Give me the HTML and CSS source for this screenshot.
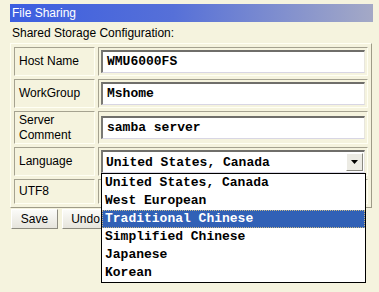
FILE: index.html
```html
<!DOCTYPE html>
<html lang="en">
<head>
    <meta charset="UTF-8">
    <title>File Sharing</title>
    <link rel="stylesheet" href="styles.css">
</head>
<body>
    <div class="page">
        <div class="title-bar">File Sharing</div>
        <div class="subtitle">Shared Storage Configuration:</div>

        <table class="config">
            <tr class="row-host">
                <td class="label">Host Name</td>
                <td class="value"><div class="field">WMU6000FS</div></td>
            </tr>
            <tr class="row-group">
                <td class="label">WorkGroup</td>
                <td class="value"><div class="field">Mshome</div></td>
            </tr>
            <tr class="row-comment">
                <td class="label">Server<br>Comment</td>
                <td class="value"><div class="field">samba server</div></td>
            </tr>
            <tr class="row-lang">
                <td class="label">Language</td>
                <td class="value">
                    <div class="select-wrap">
                        <div class="select">
                            <span class="select-text">United States, Canada</span>
                            <span class="select-arrow">
                                <svg width="7" height="4" viewBox="0 0 7 4"><path d="M0 0h7L3.5 4z" fill="#000"/></svg>
                            </span>
                        </div>
                        <ul class="options">
                            <li>United States, Canada</li>
                            <li>West European</li>
                            <li class="selected">Traditional Chinese</li>
                            <li>Simplified Chinese</li>
                            <li>Japanese</li>
                            <li>Korean</li>
                        </ul>
                    </div>
                </td>
            </tr>
            <tr class="row-utf">
                <td class="label">UTF8</td>
                <td class="value"></td>
            </tr>
        </table>

        <div class="buttons">
            <button class="btn">Save</button>
            <button class="btn">Undo</button>
        </div>
    </div>
</body>
</html>
```

FILE: styles.css
```css
* {
    margin: 0;
    padding: 0;
    box-sizing: border-box;
}

html, body {
    min-height: 100vh;
}

body {
    font-family: "Liberation Sans", Arial, sans-serif;
    font-size: 12px;
    background-color: #f5f3de;
    color: #000;
}

.page {
    min-height: 292px;
    padding: 4px 6px 0 10px;
}

.title-bar {
    height: 18px;
    line-height: 18px;
    padding-left: 2px;
    color: #fff;
    font-size: 12px;
    background: linear-gradient(to right, #3c5ee0 0%, #5670d8 45%, #a4a9c6 100%);
}

.subtitle {
    margin-top: 4px;
    padding-left: 2px;
    line-height: 14px;
}

.config {
    margin-top: 3px;
    width: 362px;
    border-collapse: separate;
    border-spacing: 3px;
    border: 1px solid;
    border-color: #fffff4 #9e9b88 #9e9b88 #fffff4;
}

.config td {
    border: 1px solid;
    border-color: #a5a290 #fffff4 #fffff4 #a5a290;
    vertical-align: middle;
}

.label {
    width: 82px;
    padding: 0 4px;
    line-height: 15px;
}

.value {
    padding: 2px;
}

.row-host td, .row-group td { height: 28px; }
.row-comment td { height: 33px; }
.row-lang td { height: 26px; }
.row-utf td { height: 25px; }

.field {
    height: 23px;
    line-height: 19px;
    padding-left: 4px;
    background: #fff;
    border-style: solid;
    border-width: 2px 1px 1px 2px;
    border-color: #6f6e6a #e8e6de #d8d6e4 #7a7974;
    font-family: "Liberation Mono", "DejaVu Sans Mono", monospace;
    font-weight: bold;
    font-size: 13px;
}

.select-wrap {
    position: relative;
}

.select {
    display: flex;
    align-items: center;
    height: 23px;
    width: 264px;
    background: #fff;
    border-style: solid;
    border-width: 2px 1px 1px 2px;
    border-color: #6f6e6a #e8e6de #d8d6e4 #7a7974;
    font-family: "Liberation Mono", "DejaVu Sans Mono", monospace;
    font-weight: bold;
    font-size: 13px;
}

.select-text {
    flex: 1;
    padding-left: 3px;
}

.select-arrow {
    width: 17px;
    height: 18px;
    margin-right: 1px;
    display: flex;
    align-items: center;
    justify-content: center;
    background: #ecebe4;
    border: 1px solid;
    border-color: #fff #8a8980 #8a8980 #fff;
}

.options {
    position: absolute;
    left: 0;
    top: 23px;
    width: 265px;
    list-style: none;
    background: #fff;
    border: 1px solid #000;
    font-family: "Liberation Mono", "DejaVu Sans Mono", monospace;
    font-weight: bold;
    font-size: 13px;
    z-index: 2;
}

.options li {
    height: 18px;
    line-height: 18px;
    padding-left: 3px;
}

.options li.selected {
    background: #3161b6;
    color: #fff;
    outline: 1px dotted #c8b888;
    outline-offset: -1px;
}

.buttons {
    display: flex;
    gap: 4px;
    margin-top: 1px;
    margin-left: 1px;
}

.btn {
    width: 47px;
    height: 20px;
    font-family: "Liberation Sans", Arial, sans-serif;
    font-size: 12px;
    background: linear-gradient(#fbfbf8, #e6e4dc);
    border: 1px solid;
    border-color: #fff #8d8b80 #8d8b80 #fff;
    color: #000;
}
```
